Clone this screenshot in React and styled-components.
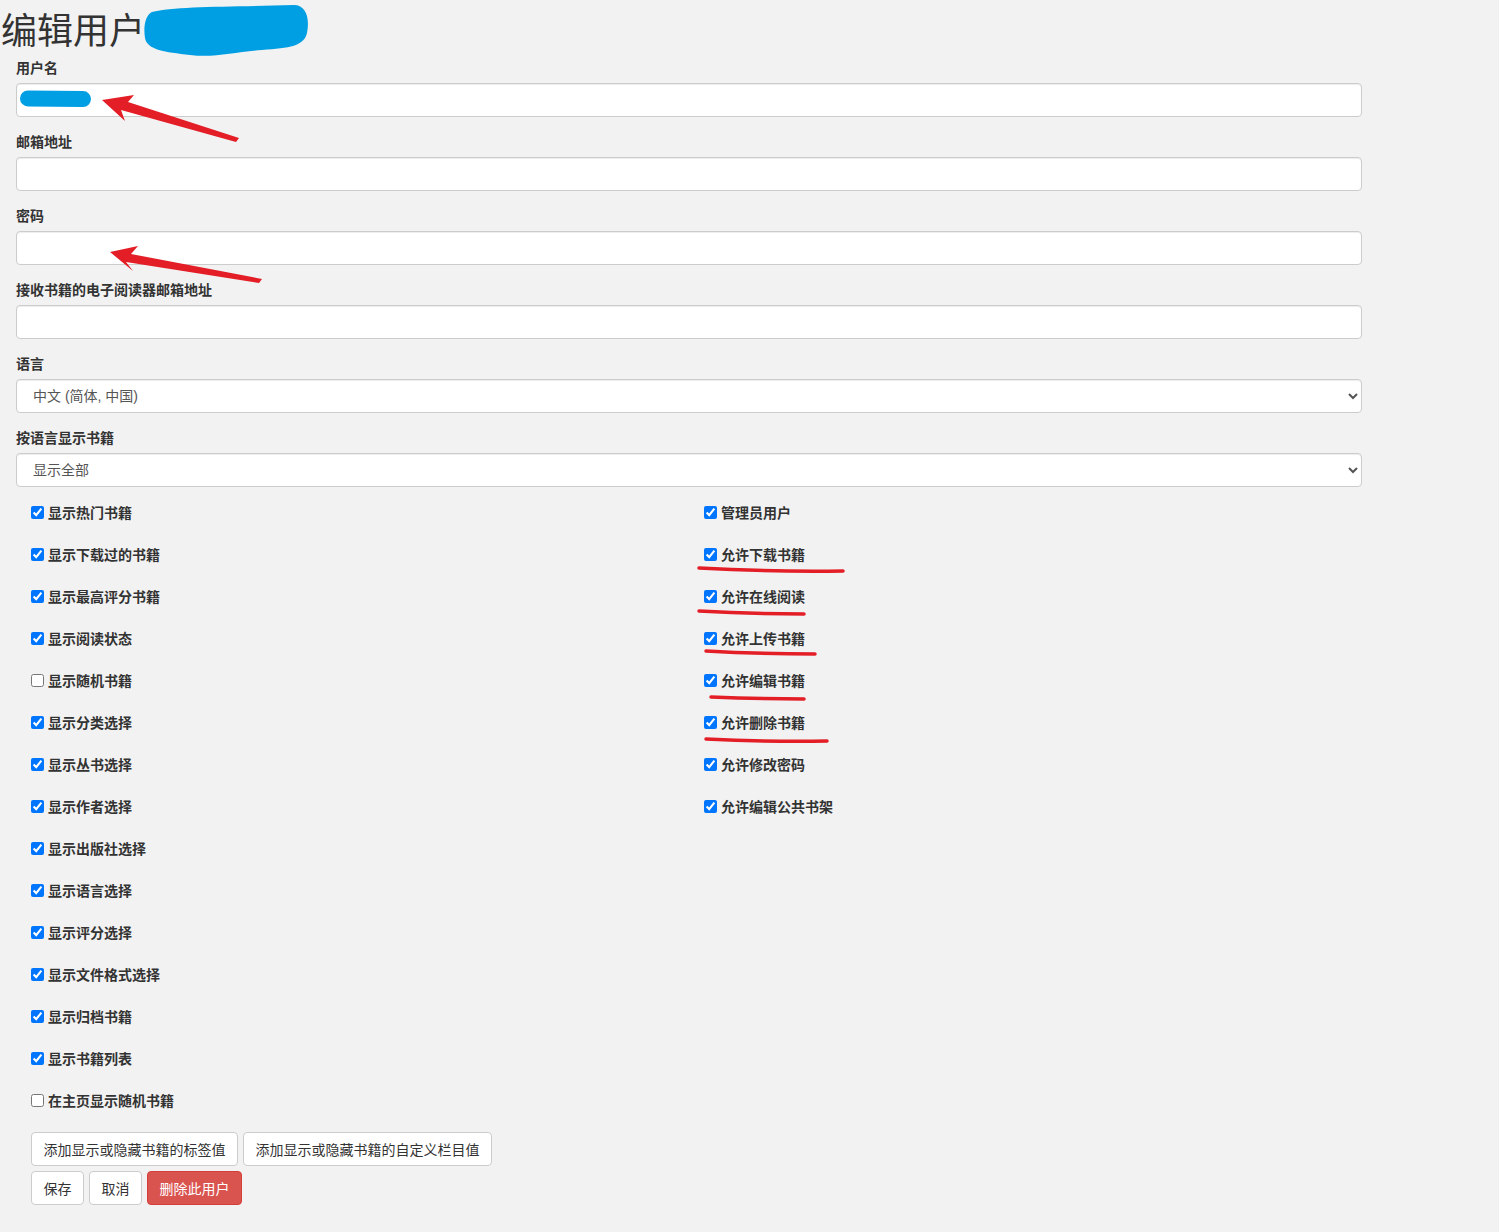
import React from "react";
import styled, { createGlobalStyle } from "styled-components";

const Global = createGlobalStyle`
  html, body { margin: 0; padding: 0; background: #f2f2f2; }
  body {
    font-family: "Liberation Sans", "Noto Sans CJK SC", sans-serif;
    font-size: 14px;
    line-height: 20px;
    color: #333;
  }
  * { box-sizing: border-box; }
`;

const Page = styled.div`
  position: relative;
  width: 1499px;
  min-height: 1232px;
  padding-top: 8px;
`;

const Title = styled.h2`
  margin: 0 0 10px 1px;
  font-family: "Noto Sans CJK SC", sans-serif;
  font-size: 36px;
  font-weight: 400;
  line-height: 40px;
  color: #333;
`;

const Form = styled.form`
  width: 1346px;
  margin-left: 16px;
`;

const Group = styled.div`
  margin-bottom: 15px;
`;

const Label = styled.label`
  display: block;
  margin-bottom: 7px;
  font-family: "Noto Sans CJK SC", sans-serif;
  font-weight: 700;
  font-size: 14px;
  line-height: 18px;
  color: #333;
`;

const fieldCss = `
  display: block;
  width: 100%;
  height: 34px;
  padding: 6px 12px;
  font-family: "Liberation Sans", "Noto Sans CJK SC", sans-serif;
  font-size: 14px;
  line-height: 20px;
  color: #555;
  background: #fff;
  border: 1px solid #ccc;
  border-radius: 4px;
  box-shadow: inset 0 1px 1px rgba(0,0,0,.075);
  outline: none;
`;

const Input = styled.input`${fieldCss}`;
const Select = styled.select`${fieldCss} padding: 6px 8px 6px 12px;`;

const Columns = styled.div`
  display: grid;
  grid-template-columns: 673px 673px;
`;

const Column = styled.div`
  display: flex;
  flex-direction: column;
  gap: 22px;
  padding: 0 15px;
`;

const Check = styled.label`
  display: flex;
  align-items: center;
  gap: 4px;
  height: 20px;
  font-family: "Noto Sans CJK SC", sans-serif;
  font-weight: 700;
  font-size: 14px;
  color: #333;
  input { margin: 1px 0 0; width: 13px; height: 13px; }
`;

const Actions = styled.div`
  display: flex;
  flex-direction: column;
  gap: 5px;
  padding: 22px 15px 0;
`;

const ButtonRow = styled.div`
  display: flex;
  gap: 5px;
`;

const Button = styled.button`
  height: 34px;
  padding: 6px 11.5px;
  font-family: "Noto Sans CJK SC", sans-serif;
  font-size: 14px;
  line-height: 20px;
  color: ${p => (p.$danger ? "#fff" : "#333")};
  background: ${p => (p.$danger ? "#d9534f" : "#fff")};
  border: 1px solid ${p => (p.$danger ? "#d43f3a" : "#ccc")};
  border-radius: 4px;
  cursor: pointer;
`;

const Overlay = styled.svg`
  position: absolute;
  left: 0;
  top: 0;
  pointer-events: none;
`;

const leftChecks = [
  ["显示热门书籍", true],
  ["显示下载过的书籍", true],
  ["显示最高评分书籍", true],
  ["显示阅读状态", true],
  ["显示随机书籍", false],
  ["显示分类选择", true],
  ["显示丛书选择", true],
  ["显示作者选择", true],
  ["显示出版社选择", true],
  ["显示语言选择", true],
  ["显示评分选择", true],
  ["显示文件格式选择", true],
  ["显示归档书籍", true],
  ["显示书籍列表", true],
  ["在主页显示随机书籍", false],
];

const rightChecks = [
  "管理员用户",
  "允许下载书籍",
  "允许在线阅读",
  "允许上传书籍",
  "允许编辑书籍",
  "允许删除书籍",
  "允许修改密码",
  "允许编辑公共书架",
];

function Annotations() {
  const red = "#e31e26";
  const blue = "#009fe3";
  return (
    <Overlay width="1499" height="1232" viewBox="0 0 1499 1232">
      <path
        d="M152 12 C175 6 230 7 294 5 C306 5 310 18 307 33 C304 46 290 48 262 50 C235 52 215 58 190 55 C165 52 147 50 145 38 C143 25 146 15 152 12 Z"
        fill={blue}
      />
      <line x1="28" y1="98.5" x2="83" y2="99" stroke={blue} strokeWidth="16" strokeLinecap="round" />
      <polygon points="102,100 134,95 128,102 239,138 236,142 121,110 125,121" fill={red} />
      <polygon points="110,252 138,246 131,254 262,279 259,283 126,262 133,271" fill={red} />
      <g stroke={red} strokeWidth="3.5" strokeLinecap="round" fill="none">
        <path d="M699 568 Q770 572 843 571" />
        <path d="M699 611 Q750 614 804 614" />
        <path d="M706 651 Q760 654 815 654" />
        <path d="M711 697 Q760 699 804 699" />
        <path d="M706 739 Q770 742 827 741" />
      </g>
    </Overlay>
  );
}

export default function App() {
  return (
    <Page>
      <Global />
      <Title>编辑用户</Title>
      <Form onSubmit={e => e.preventDefault()}>
        <Group>
          <Label>用户名</Label>
          <Input type="text" defaultValue="" />
        </Group>
        <Group>
          <Label>邮箱地址</Label>
          <Input type="email" />
        </Group>
        <Group>
          <Label>密码</Label>
          <Input type="password" />
        </Group>
        <Group>
          <Label>接收书籍的电子阅读器邮箱地址</Label>
          <Input type="text" />
        </Group>
        <Group>
          <Label>语言</Label>
          <Select defaultValue="zh">
            <option value="zh">中文 (简体, 中国)</option>
          </Select>
        </Group>
        <Group>
          <Label>按语言显示书籍</Label>
          <Select defaultValue="all">
            <option value="all">显示全部</option>
          </Select>
        </Group>
        <Columns>
          <Column>
            {leftChecks.map(([t, c]) => (
              <Check key={t}>
                <input type="checkbox" defaultChecked={c} />
                {t}
              </Check>
            ))}
          </Column>
          <Column>
            {rightChecks.map(t => (
              <Check key={t}>
                <input type="checkbox" defaultChecked />
                {t}
              </Check>
            ))}
          </Column>
        </Columns>
        <Actions>
          <ButtonRow>
            <Button type="button">添加显示或隐藏书籍的标签值</Button>
            <Button type="button">添加显示或隐藏书籍的自定义栏目值</Button>
          </ButtonRow>
          <ButtonRow>
            <Button type="submit">保存</Button>
            <Button type="button">取消</Button>
            <Button type="button" $danger>删除此用户</Button>
          </ButtonRow>
        </Actions>
      </Form>
      <Annotations />
    </Page>
  );
}
